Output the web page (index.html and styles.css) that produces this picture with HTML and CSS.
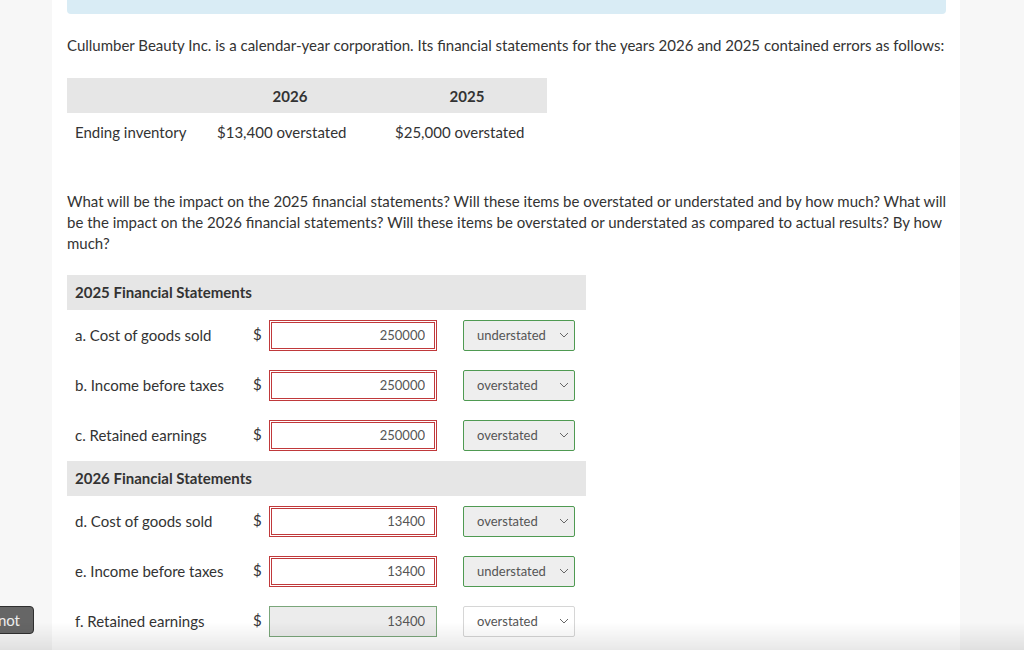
FILE: index.html
```html
<!DOCTYPE html>
<html lang="en">
<head>
  <meta charset="UTF-8" />
  <meta name="viewport" content="width=device-width, initial-scale=1.0"/>
  <title>Inventory Errors</title>
  <link rel="stylesheet" href="styles.css">
</head>
<body>
  <div class="page">
    <div class="side"></div>
    <div class="panel">
      <div class="notice"></div>

      <p class="intro">Cullumber Beauty Inc. is a calendar-year corporation. Its financial statements for the years 2026 and 2025 contained errors as follows:</p>

      <div class="errors">
        <div class="errors-head">
          <span></span>
          <span>2026</span>
          <span></span>
          <span>2025</span>
        </div>
        <div class="errors-row">
          <span>Ending inventory</span>
          <span>$13,400 overstated</span>
          <span></span>
          <span>$25,000 overstated</span>
        </div>
      </div>

      <p class="question">What will be the impact on the 2025 financial statements? Will these items be overstated or understated and by how much? What will be the impact on the 2026 financial statements? Will these items be overstated or understated as compared to actual results? By how much?</p>

      <div class="answers">
        <div class="group-head">2025 Financial Statements</div>

        <div class="row">
          <div class="label">a. Cost of goods sold</div>
          <div class="dollar">$</div>
          <input class="amount wrong" type="text" value="250000">
          <div class="select right-answer"><span>understated</span>
            <svg width="10" height="6" viewBox="0 0 10 6"><path d="M1 1 L5 5 L9 1" fill="none" stroke="#666" stroke-width="1"/></svg>
          </div>
        </div>

        <div class="row">
          <div class="label">b. Income before taxes</div>
          <div class="dollar">$</div>
          <input class="amount wrong" type="text" value="250000">
          <div class="select right-answer"><span>overstated</span>
            <svg width="10" height="6" viewBox="0 0 10 6"><path d="M1 1 L5 5 L9 1" fill="none" stroke="#666" stroke-width="1"/></svg>
          </div>
        </div>

        <div class="row">
          <div class="label">c. Retained earnings</div>
          <div class="dollar">$</div>
          <input class="amount wrong" type="text" value="250000">
          <div class="select right-answer"><span>overstated</span>
            <svg width="10" height="6" viewBox="0 0 10 6"><path d="M1 1 L5 5 L9 1" fill="none" stroke="#666" stroke-width="1"/></svg>
          </div>
        </div>

        <div class="group-head">2026 Financial Statements</div>

        <div class="row">
          <div class="label">d. Cost of goods sold</div>
          <div class="dollar">$</div>
          <input class="amount wrong" type="text" value="13400">
          <div class="select right-answer"><span>overstated</span>
            <svg width="10" height="6" viewBox="0 0 10 6"><path d="M1 1 L5 5 L9 1" fill="none" stroke="#666" stroke-width="1"/></svg>
          </div>
        </div>

        <div class="row">
          <div class="label">e. Income before taxes</div>
          <div class="dollar">$</div>
          <input class="amount wrong" type="text" value="13400">
          <div class="select right-answer"><span>understated</span>
            <svg width="10" height="6" viewBox="0 0 10 6"><path d="M1 1 L5 5 L9 1" fill="none" stroke="#666" stroke-width="1"/></svg>
          </div>
        </div>

        <div class="row">
          <div class="label">f. Retained earnings</div>
          <div class="dollar">$</div>
          <input class="amount correct" type="text" value="13400">
          <div class="select"><span>overstated</span>
            <svg width="10" height="6" viewBox="0 0 10 6"><path d="M1 1 L5 5 L9 1" fill="none" stroke="#666" stroke-width="1"/></svg>
          </div>
        </div>
      </div>
    </div>
  </div>

  <button class="tab-btn">not</button>
  <div class="fade"></div>
</body>
</html>
```

FILE: styles.css
```css
* {
  margin: 0;
  padding: 0;
  box-sizing: border-box;
}

body {
  background: #f7f7f7;
  font-family: Lato, 'Open Sans', sans-serif;
  font-size: 15px;
  color: #333;
  overflow: hidden;
}

.page {
  display: flex;
}

.side {
  width: 52px;
  flex-shrink: 0;
}

.panel {
  width: 908px;
  background: #fff;
  padding: 0 14px 40px 15px;
}

.notice {
  height: 14px;
  background: #d9ecf5;
  border-radius: 0 0 4px 4px;
}

.intro {
  margin-top: 21px;
  line-height: 21px;
}

/* errors table */
.errors {
  width: 480px;
  margin-top: 22px;
}

.errors-head,
.errors-row {
  display: grid;
  grid-template-columns: 142px 162px 16px 160px;
}

.errors-head {
  height: 35px;
  align-items: center;
  background: #e6e6e6;
  font-weight: bold;
  text-align: center;
}

.errors-row {
  height: 37px;
  align-items: center;
}

.errors-row span {
  padding-left: 8px;
}

.question {
  margin-top: 41px;
  margin-right: -8px;
  line-height: 21px;
}

/* answer rows */
.answers {
  width: 519px;
  margin-top: 21px;
}

.group-head {
  height: 35px;
  line-height: 35px;
  padding-left: 8px;
  background: #e6e6e6;
  font-weight: bold;
}

.answers .row + .group-head {
  margin-top: 1px;
}

.row {
  display: flex;
  align-items: center;
  height: 50px;
}

.label {
  width: 184px;
  padding-left: 8px;
}

.dollar {
  width: 18px;
  padding-left: 2px;
  margin-top: -3px;
}

.amount {
  width: 168px;
  height: 31px;
  padding-right: 9px;
  font-family: Lato, sans-serif;
  font-size: 13px;
  color: #555;
  text-align: right;
  background: #fff;
  outline: none;
}

.amount.wrong {
  border: 3px double #c0393b;
}

.amount.correct {
  border: 1px solid #7aa67a;
  background: #ececec;
  padding-right: 11px;
}

.select {
  display: flex;
  align-items: center;
  justify-content: space-between;
  width: 112px;
  height: 31px;
  margin-left: 26px;
  padding: 0 5px 0 13px;
  font-size: 13px;
  color: #555;
  background: #fff;
  border: 1px solid #d6d6d6;
  border-radius: 2px;
}

.select.right-answer {
  background: #eee;
  border-color: #4f9a52;
}

.tab-btn {
  position: fixed;
  left: -20px;
  top: 606px;
  width: 54px;
  height: 28px;
  padding-right: 13px;
  text-align: right;
  font-family: Lato, sans-serif;
  font-size: 15px;
  color: #eee;
  background: #666;
  border: 1px solid #2f2f2f;
  border-radius: 4px;
}

.fade {
  position: fixed;
  left: 0;
  right: 0;
  bottom: 0;
  height: 28px;
  background: linear-gradient(rgba(0, 0, 0, 0), rgba(0, 0, 0, 0.09));
  pointer-events: none;
}
```
